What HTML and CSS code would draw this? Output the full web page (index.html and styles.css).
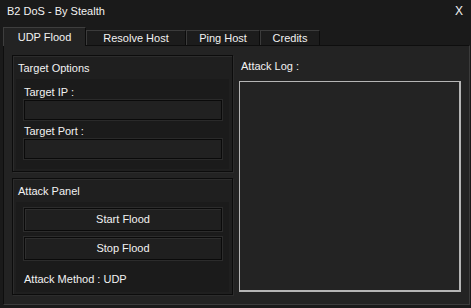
FILE: index.html
```html
<!DOCTYPE html>
<html>
<head>
<meta charset="utf-8">
<link rel="stylesheet" href="styles.css">
</head>
<body>
<div class="window">
  <div class="titlebar">
    <span class="title">B2 DoS - By Stealth</span>
    <span class="close">X</span>
  </div>
  <div class="tabs">
    <div class="tab active">UDP Flood</div>
    <div class="tab w-resolve">Resolve Host</div>
    <div class="tab w-ping">Ping Host</div>
    <div class="tab w-credits">Credits</div>
  </div>
  <div class="panel">
    <div class="left">
      <div class="group g-target">
        <div class="group-title">Target Options</div>
        <div class="group-inner">
          <div class="label">Target IP :</div>
          <div class="textbox"></div>
          <div class="label">Target Port :</div>
          <div class="textbox"></div>
        </div>
      </div>
      <div class="group g-attack">
        <div class="group-title">Attack Panel</div>
        <div class="group-inner attack-inner">
          <div class="button">Start Flood</div>
          <div class="button">Stop Flood</div>
          <div class="method">Attack Method : UDP</div>
        </div>
      </div>
    </div>
    <div class="right">
      <div class="log-label">Attack Log :</div>
      <div class="log"></div>
    </div>
  </div>
</div>
</body>
</html>
```

FILE: styles.css
```css
* { box-sizing: border-box; }
html, body { margin: 0; padding: 0; background: #1a1a1a; }
body {
  font-family: "Liberation Sans", Arial, sans-serif;
  font-size: 11px;
  line-height: 13px;
  color: #f2f2f2;
}
.window {
  width: 471px;
  height: 308px;
  background: #1a1a1a;
  display: flex;
  flex-direction: column;
}
.titlebar {
  height: 27px;
  display: flex;
  justify-content: space-between;
  align-items: flex-start;
  padding: 5px 8px 0 7px;
}
.close { font-size: 12px; }
.tabs {
  height: 18px;
  display: flex;
  align-items: flex-end;
  padding-left: 3px;
  position: relative;
  z-index: 1;
}
.tab {
  height: 15px;
  border: 1px solid #3b3b3b;
  border-bottom: none;
  border-right-color: #0c0c0c;
  background: #1c1c1c;
  text-align: center;
  line-height: 14px;
}
.tab.active {
  width: 83px;
  height: 19px;
  margin-bottom: -1px;
  background: #232323;
  border-color: #3e3e3e;
  border-right-color: #0c0c0c;
  line-height: 18px;
  padding-bottom: 2px;
}
.w-resolve { width: 100px; }
.w-ping { width: 74px; }
.w-credits { width: 60px; }
.panel {
  height: 260px;
  margin: 0 1px 3px 3px;
  border: 1px solid #3b3b3b;
  border-left-color: #0e0e0e;
  border-top-color: #0e0e0e;
  background: #232323;
  display: flex;
  gap: 6px;
  padding: 9px 8px 9px 8px;
}
.left {
  width: 221px;
  display: flex;
  flex-direction: column;
  gap: 6px;
}
.group {
  height: 117px;
  border: 1px solid #0c0c0c;
  box-shadow: inset 1px 1px 0 #2c2c2c, 1px 1px 0 #2c2c2c;
  background: #1f1f1f;
  padding: 0 3px 2px 3px;
  display: flex;
  flex-direction: column;
}
.group-title {
  height: 23px;
  padding: 6px 0 0 2px;
}
.group-inner {
  flex: 1;
  background: #1b1b1b;
  padding: 7px 5px 0 8px;
}
.label { height: 14px; }
.textbox {
  width: 198px;
  height: 20px;
  border: 1px solid #0a0a0a;
  box-shadow: 0 0 0 1px #2a2a2a;
  background: #212121;
  margin-bottom: 5px;
}
.attack-inner { padding-top: 6px; }
.button {
  width: 198px;
  height: 23px;
  border: 1px solid #0a0a0a;
  box-shadow: 0 0 0 1px #2c2c2c, inset 1px 1px 0 #2e2e2e;
  background: #1f1f1f;
  text-align: center;
  line-height: 21px;
  margin-bottom: 6px;
}
.method { padding-top: 7px; }
.right {
  flex: 1;
  display: flex;
  flex-direction: column;
}
.log-label {
  height: 26px;
  padding: 5px 0 0 2px;
}
.log {
  height: 211px;
  border: 2px solid #b5b5b5;
  border-width: 1px 2px 2px 1px;
  background: #232323;
}
```
